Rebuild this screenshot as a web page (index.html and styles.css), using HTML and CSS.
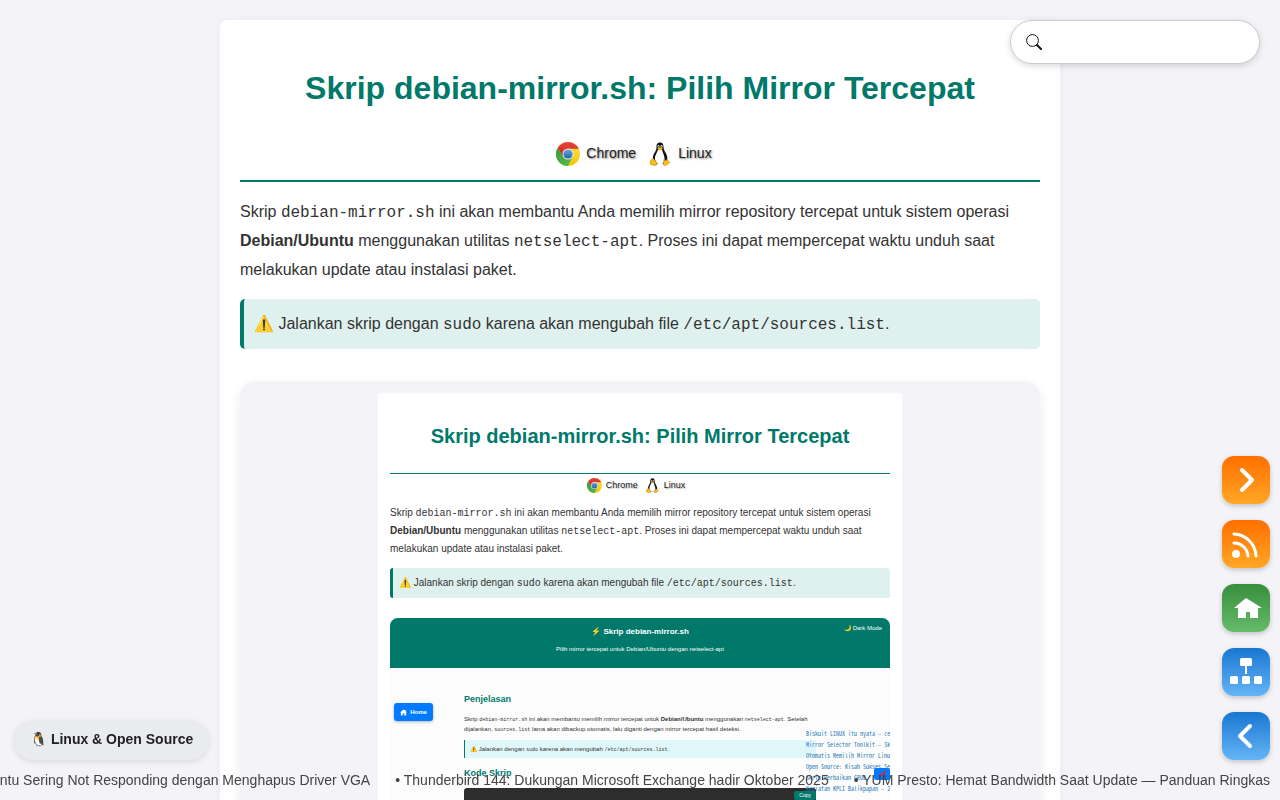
FILE: index.html
```html
<!DOCTYPE html>
<html lang="id">
<head>
<meta charset="utf-8">
<meta name="viewport" content="width=device-width, initial-scale=1">
<title>Skrip debian-mirror.sh: Pilih Mirror Tercepat</title>
<link rel="stylesheet" href="styles.css">
</head>
<body>
<svg class="symbols" aria-hidden="true">
  <defs>
    <linearGradient id="red" x1="0" y1="0" x2="0" y2="1"><stop offset="0" stop-color="#e5483c"/><stop offset="1" stop-color="#cf1f1b"/></linearGradient>
    <linearGradient id="green" x1="0" y1="0" x2="1" y2="1"><stop offset="0" stop-color="#2f9e3f"/><stop offset="1" stop-color="#5fbc50"/></linearGradient>
    <linearGradient id="yellow" x1="0" y1="0" x2="0" y2="1"><stop offset="0" stop-color="#ffe04a"/><stop offset="1" stop-color="#f3c60a"/></linearGradient>
    <linearGradient id="blue" x1="0" y1="0" x2="0" y2="1"><stop offset="0" stop-color="#6fa8dc"/><stop offset="1" stop-color="#1c62ae"/></linearGradient>
    <symbol id="chrome" viewBox="0 0 48 48">
      <circle cx="24" cy="24" r="24" fill="url(#yellow)"/>
      <path d="M3.2 12A24 24 0 0 1 44.800 12L45.500 13.500H24L14.500 29.500Z" fill="url(#red)"/>
      <path d="M3.200 12A24 24 0 0 0 24 48L33.500 29.300H14.700Z" fill="url(#green)"/>
      <circle cx="24" cy="24" r="11" fill="#e8eef0"/>
      <circle cx="24" cy="24" r="9.200" fill="url(#blue)"/>
    </symbol>
    <symbol id="tux" viewBox="0 0 40 48">
      <path d="M20 1C14 1 12.500 6 13 11C13.500 17 8 21 6 29C4.500 35 6 40 10 43L30 43C35 39 35.500 34 34 28C32 21 27 17 27 10C27 5 25.500 1 20 1Z" fill="#111"/>
      <path d="M16 15C15 21 10 25 10 33C10 41 15 44 20 44C27 44 30 39 29 32C28 25 25 21 24 15Z" fill="#fff"/>
      <ellipse cx="17" cy="9" rx="2" ry="2.800" fill="#ddd"/><ellipse cx="23" cy="9" rx="2.200" ry="2.800" fill="#ddd"/>
      <circle cx="17.600" cy="9.500" r="1.200" fill="#111"/><circle cx="22.400" cy="9.500" r="1.200" fill="#111"/>
      <path d="M14.500 13L20 10.500L26 13L20 17Z" fill="#f5b400"/>
      <path d="M7 33L13 41C16 46 12 48 8 46.500L1 45C-1 44 1 40 1 37C1 35 5 36 7 33Z" fill="#f8bd17" stroke="#ad7606"/>
      <path d="M28 35C29 38 32 37 34 35L39 40C41 42 36 43 33 46C30 49 26 47 27 43Z" fill="#f8bd17" stroke="#ad7606"/>
    </symbol>
  </defs>
</svg>

<main class="page">
  <h1 class="page-title">Skrip debian-mirror.sh: Pilih Mirror Tercepat</h1>
  <div class="badges">
    <span class="badge"><svg class="badge-icon"><use href="#chrome"/></svg>Chrome</span>
    <span class="badge"><svg class="badge-icon"><use href="#tux"/></svg>Linux</span>
  </div>
  <p class="intro">Skrip <code>debian-mirror.sh</code> ini akan membantu Anda memilih mirror repository tercepat untuk sistem operasi <strong>Debian/Ubuntu</strong> menggunakan utilitas <code>netselect-apt</code>. Proses ini dapat mempercepat waktu unduh saat melakukan update atau instalasi paket.</p>
  <div class="note">⚠️ Jalankan skrip dengan <code>sudo</code> karena akan mengubah file <code>/etc/apt/sources.list</code>.</div>

  <figure class="preview">
    <div class="mini">
      <h2 class="mini-title">Skrip debian-mirror.sh: Pilih Mirror Tercepat</h2>
      <div class="mini-badges">
        <span class="mini-badge"><svg class="mini-icon"><use href="#chrome"/></svg>Chrome</span>
        <span class="mini-badge"><svg class="mini-icon"><use href="#tux"/></svg>Linux</span>
      </div>
      <p class="mini-intro">Skrip <code>debian-mirror.sh</code> ini akan membantu Anda memilih mirror repository tercepat untuk sistem operasi <strong>Debian/Ubuntu</strong> menggunakan utilitas <code>netselect-apt</code>. Proses ini dapat mempercepat waktu unduh saat melakukan update atau instalasi paket.</p>
      <div class="mini-note">⚠️ Jalankan skrip dengan <code>sudo</code> karena akan mengubah file <code>/etc/apt/sources.list</code>.</div>
      <section class="demo">
        <header class="demo-header">
          <h3 class="demo-title">⚡ Skrip debian-mirror.sh</h3>
          <p class="demo-subtitle">Pilih mirror tercepat untuk Debian/Ubuntu dengan netselect-apt</p>
          <button class="demo-mode" type="button">🌙 Dark Mode</button>
        </header>
        <div class="demo-body">
          <nav class="demo-nav">
            <a class="demo-home" href="#"><svg class="demo-home-icon" viewBox="0 0 16 16"><path d="M8 1L0 8h2v7h4v-5h4v5h4V8h2l-3-3V2h-2v1z" fill="currentColor"/></svg>Home</a>
          </nav>
          <div class="demo-content">
            <h4 class="demo-heading">Penjelasan</h4>
            <p class="demo-text">Skrip <code>debian-mirror.sh</code> ini akan membantu memilih mirror tercepat untuk <strong>Debian/Ubuntu</strong> menggunakan <code>netselect-apt</code>. Setelah<br>dijalankan, <code>sources.list</code> lama akan dibackup otomatis, lalu diganti dengan mirror tercepat hasil deteksi.</p>
            <div class="demo-note">⚠️ Jalankan dengan <code>sudo</code> karena akan mengubah <code>/etc/apt/sources.list</code>.</div>
            <h4 class="demo-heading">Kode Skrip</h4>
            <div class="demo-code"><button class="demo-copy" type="button">Copy</button></div>
          </div>
          <aside class="demo-feed">
            <a href="#">Biskuit LINUX itu nyata – cemilan</a>
            <a href="#">Mirror Selector Toolkit – Skrip</a>
            <a href="#">Otomatis Memilih Mirror Linux</a>
            <a href="#">Open Source: Kisah Sukses Sejati</a>
            <a href="#">Skrip Perbaikan GRUB</a>
            <a href="#">Kegiatan KPLI Balikpapan – 2025</a>
            <button class="demo-top" type="button" aria-label="Ke atas"><svg viewBox="0 0 16 12"><path d="M4 9L11 2L12 5L6 9Z" fill="#c92850"/></svg></button>
          </aside>
        </div>
      </section>
    </div>
  </figure>
</main>

<label class="search">
  <svg class="search-icon" viewBox="0 0 16 16"><circle cx="6.500" cy="6.500" r="5.900" fill="none" stroke="#111" stroke-width="1"/><path d="M11 11L15 15" stroke="#111" stroke-width="2" stroke-linecap="round"/></svg>
  <input class="search-input" type="search" aria-label="Cari">
</label>

<nav class="dock" aria-label="Navigasi">
  <a class="dock-link orange" href="#" aria-label="Berikutnya"><svg viewBox="0 0 48 48"><path d="M20 14L30 24L20 34" fill="none" stroke="#fff" stroke-width="4" stroke-linecap="round" stroke-linejoin="round"/></svg></a>
  <a class="dock-link orange" href="#" aria-label="RSS"><svg viewBox="0 0 48 48"><circle cx="14" cy="34" r="4" fill="#fff"/><path d="M12 23A14 14 0 0 1 26 36M12 14A23 23 0 0 1 34 36" fill="none" stroke="#fff" stroke-width="3" stroke-linecap="round"/></svg></a>
  <a class="dock-link green" href="#" aria-label="Beranda"><svg viewBox="0 0 48 48"><path d="M24 14L40 24H36V34H28V28H24V34H16V24H12Z" fill="#fff"/></svg></a>
  <a class="dock-link blue" href="#" aria-label="Peta situs"><svg viewBox="0 0 48 48"><g fill="#fff"><rect x="18" y="10" width="12" height="8" rx="1.500"/><rect x="23" y="17" width="2" height="9"/><rect x="8" y="28" width="8" height="8" rx="1.500"/><rect x="20" y="28" width="8" height="8" rx="1.500"/><rect x="32" y="28" width="8" height="8" rx="1.500"/></g></svg></a>
  <a class="dock-link blue" href="#" aria-label="Sebelumnya"><svg viewBox="0 0 48 48"><path d="M28 14L18 24L28 34" fill="none" stroke="#fff" stroke-width="4" stroke-linecap="round" stroke-linejoin="round"/></svg></a>
</nav>

<a class="topic" href="#">🐧 Linux &amp; Open Source</a>

<footer class="ticker">
  <a href="#">Ubuntu Sering Not Responding dengan Menghapus Driver VGA</a>
  <a href="#">• Thunderbird 144: Dukungan Microsoft Exchange hadir Oktober 2025</a>
  <a href="#">• YUM Presto: Hemat Bandwidth Saat Update — Panduan Ringkas</a>
</footer>
</body>
</html>
```
FILE: styles.css
```css
* { box-sizing: border-box; }
body {
  margin: 0;
  padding: 20px 20px 0;
  height: 100vh;
  overflow: hidden;
  background: #f4f3f8;
  color: #333;
  font: 16px/29px "Liberation Sans", Arial, sans-serif;
}
a { color: inherit; text-decoration: none; }
button { border: 0; font-family: inherit; }
code { font-family: "Liberation Mono", monospace; font-size: 1em; line-height: 1; }
.symbols { position: absolute; width: 0; height: 0; }

.page {
  max-width: 840px;
  margin: 0 auto;
  padding: 40px 20px 20px;
  background: #fff;
  border-radius: 8px;
  box-shadow: 0 0 10px rgba(0, 0, 0, .04);
}
.page-title {
  margin: 0;
  color: #00796b;
  font-size: 32px;
  line-height: 56px;
  text-align: center;
}
.badges {
  display: flex;
  justify-content: center;
  gap: 12px;
  padding: 25px 12px 14px 0;
  border-bottom: 2px solid #00796b;
}
.badge {
  display: flex;
  align-items: center;
  gap: 6px;
  color: #222;
  font-size: 14px;
  line-height: 25px;
  text-shadow: 1px 1px 2px rgba(0, 0, 0, .5);
}
.badge-icon { width: 24px; height: 24px; }
.intro { margin: 15px 0; }
.note {
  padding: 10px;
  border-left: 4px solid #00796b;
  border-radius: 5px;
  background: #dff1ee;
  line-height: 30px;
}

.preview {
  margin: 32px 0 0;
  padding: 12px;
  border-radius: 16px;
  background: #f4f3f8;
  box-shadow: 0 4px 12px rgba(0, 0, 0, .08);
}
.mini {
  max-width: 524px;
  margin: 0 auto;
  padding: 20px 12px;
  border-radius: 4px;
  background: #fff;
  font-size: 10px;
  line-height: 18px;
}
.mini-title {
  margin: 0;
  padding: 8px 0 22px;
  border-bottom: 1px solid #00796b;
  color: #00796b;
  font-size: 20px;
  line-height: 30px;
  text-align: center;
}
.mini-badges {
  display: flex;
  justify-content: center;
  gap: 7px;
  padding: 2px 8px 0 0;
}
.mini-badge {
  display: flex;
  align-items: center;
  gap: 4px;
  color: #222;
  font-size: 9px;
  text-shadow: 1px 1px 1px rgba(0, 0, 0, .3);
}
.mini-icon { width: 15px; height: 15px; }
.mini-intro { margin: 10px 0; }
.mini-note {
  padding: 6px;
  border-left: 3px solid #00796b;
  border-radius: 3px;
  background: #dff1ee;
}

.demo {
  margin-top: 20px;
  overflow: hidden;
  border-radius: 8px 8px 0 0;
  background: #fcfcfc;
  font-size: 6px;
  line-height: 10px;
}
.demo-header {
  position: relative;
  padding: 8px 8px 14px;
  background: #00796b;
  color: #fff;
  text-align: center;
}
.demo-title { margin: 0 0 7px; font-size: 8px; line-height: 11px; }
.demo-subtitle { margin: 0; }
.demo-mode {
  position: absolute;
  top: 5px;
  right: 8px;
  padding: 0;
  background: none;
  color: #fff;
  font-size: 6px;
  line-height: 10px;
}
.demo-body { display: flex; }
.demo-nav { flex: 0 0 74px; padding: 35px 0 0 4px; }
.demo-home {
  display: flex;
  align-items: center;
  justify-content: center;
  gap: 3px;
  width: 39px;
  height: 18px;
  border-radius: 3px;
  background: #007bff;
  box-shadow: 0 1px 3px rgba(0, 0, 0, .3);
  color: #fff;
  font-size: 6px;
  font-weight: bold;
}
.demo-home-icon { width: 7px; height: 7px; }
.demo-content { flex: 0 0 352px; padding-top: 24px; }
.demo-heading { margin: 0; color: #00796b; font-size: 9px; line-height: 14px; }
.demo-text { margin: 8px 0 6px; white-space: nowrap; }
.demo-text code, .demo-note code { font-size: 5px; }
.demo-note {
  margin-bottom: 8px;
  padding: 4px 5px;
  border-left: 1px solid #00796b;
  background: #e0f7fa;
}
.demo-code {
  display: flex;
  justify-content: flex-end;
  align-items: flex-start;
  height: 60px;
  margin-top: 8px;
  padding: 3px 0;
  border-radius: 3px;
  background: #2d2d2d;
}
.demo-copy {
  padding: 0 5px;
  border-radius: 2px;
  background: #00796b;
  color: #fff;
  font-size: 5px;
  line-height: 9px;
}
.demo-feed {
  position: relative;
  flex: 1 1 0;
  min-width: 0;
  margin-left: -10px;
  padding-top: 60px;
  color: #267cb9;
  font: 6px/11px "Noto Sans Mono CJK SC", "Noto Sans Mono CJK JP", "DejaVu Sans Mono", monospace;
}
.demo-feed a { display: block; overflow: hidden; white-space: nowrap; }
.demo-top {
  position: absolute;
  top: 100px;
  right: 0;
  width: 16px;
  height: 12px;
  padding: 0;
  border-radius: 2px;
  background: #007bff;
}
.demo-top svg { display: block; }

.search {
  position: fixed;
  top: 20px;
  right: 20px;
  display: flex;
  align-items: center;
  gap: 8px;
  width: 250px;
  height: 44px;
  padding: 0 15px;
  border: 1px solid #ccc;
  border-radius: 22px;
  background: #fff;
  box-shadow: 0 2px 6px rgba(0, 0, 0, .15);
}
.search-icon { flex: none; width: 16px; height: 16px; }
.search-input { flex: 1; min-width: 0; border: 0; outline: 0; background: none; font-size: 16px; }

.dock {
  position: fixed;
  right: 10px;
  bottom: 40px;
  display: grid;
  gap: 16px;
}
.dock-link {
  width: 48px;
  height: 48px;
  border-radius: 12px;
  box-shadow: 0 2px 5px rgba(0, 0, 0, .2);
}
.dock-link svg { display: block; }
.orange { background: linear-gradient(#ff6f00, #ffa726); }
.green { background: linear-gradient(#388e3c, #66bb6a); }
.blue { background: linear-gradient(#1976d2, #64b5f6); }

.topic {
  position: fixed;
  left: 14px;
  bottom: 40px;
  padding: 0 16px 2px;
  border-radius: 20px;
  background: #e9ebee;
  box-shadow: 0 2px 6px rgba(0, 0, 0, .1);
  color: #222;
  font-size: 14px;
  font-weight: bold;
  line-height: 38px;
}
.ticker {
  position: fixed;
  right: 10px;
  bottom: 10px;
  display: flex;
  gap: 25px;
  color: #444;
  font-size: 14px;
  line-height: 20px;
  white-space: nowrap;
}
```
